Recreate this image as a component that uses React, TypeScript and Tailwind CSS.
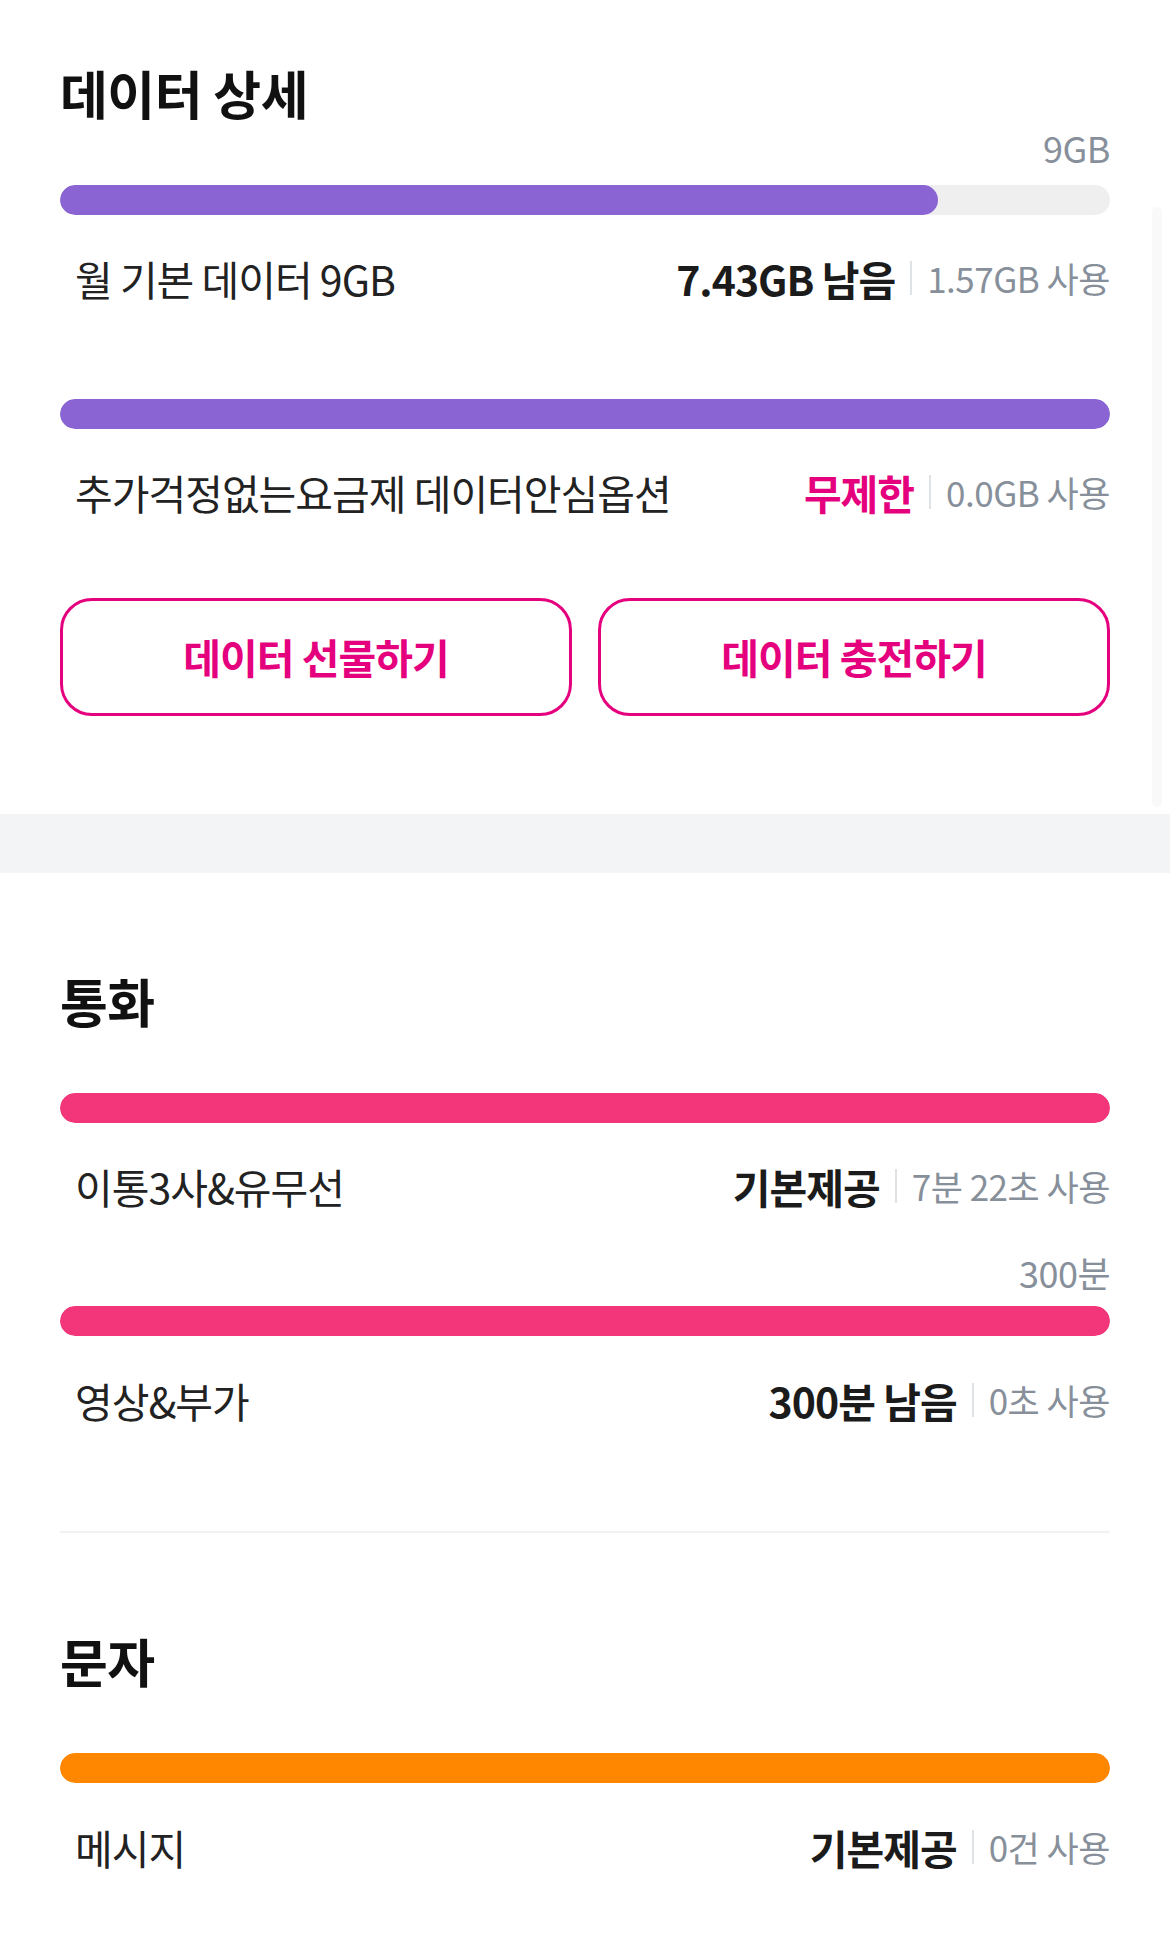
import React from "react";

type UsageRow = {
  label: string;
  value: string;
  valueClass?: string;
  used: string;
};

function Bar({ color, fill }: { color: string; fill: number }) {
  return (
    <div className="h-[30px] w-full rounded-full bg-[#efefef] overflow-hidden">
      <div className={`h-full rounded-full ${color}`} style={{ width: `${fill}%` }} />
    </div>
  );
}

function Row({ row }: { row: UsageRow }) {
  return (
    <div className="flex items-center justify-between pl-[15px] h-[48px]">
      <span className="text-[41px] tracking-[-1px] text-[#222222] leading-[48px]">{row.label}</span>
      <div className="flex items-center">
        <span className={`text-[41px] font-bold tracking-[-1px] leading-[48px] ${row.valueClass ?? "text-[#1b1b1b]"}`}>
          {row.value}
        </span>
        <span className="mx-[15px] h-[34px] w-[2px] bg-[#dfe2e5]" />
        <span className="text-[35px] tracking-[-0.5px] text-[#87909a] leading-[48px]">{row.used}</span>
      </div>
    </div>
  );
}

function Title({ children }: { children: React.ReactNode }) {
  return (
    <h2 className="text-[52px] font-bold tracking-[-0.5px] leading-[60px] text-[#111111]">{children}</h2>
  );
}

function Total({ children }: { children: React.ReactNode }) {
  return (
    <div className="text-right text-[36px] tracking-[-0.5px] leading-[40px] text-[#87909a]">{children}</div>
  );
}

export default function App() {
  return (
    <div className="relative w-[1170px] min-h-[1954px] bg-white font-['Noto_Sans_CJK_KR',sans-serif]">
      <div className="absolute right-[8px] top-[207px] h-[600px] w-[10px] rounded-full bg-[#f9f9f9]" />

      {/* 데이터 */}
      <section className="px-[60px] pt-[63px] pb-[98px]">
        <Title>데이터 상세</Title>
        <div className="mt-[4px]">
          <Total>9GB</Total>
        </div>
        <div className="mt-[18px]">
          <Bar color="bg-[#8b64d3]" fill={83.6} />
        </div>
        <div className="mt-[39px]">
          <Row row={{ label: "월 기본 데이터 9GB", value: "7.43GB 남음", used: "1.57GB 사용" }} />
        </div>
        <div className="mt-[97px]">
          <Bar color="bg-[#8b64d3]" fill={100} />
        </div>
        <div className="mt-[39px]">
          <Row
            row={{
              label: "추가걱정없는요금제 데이터안심옵션",
              value: "무제한",
              valueClass: "text-[#e5007e]",
              used: "0.0GB 사용",
            }}
          />
        </div>
        <div className="mt-[82px] grid grid-cols-2 gap-[26px]">
          <button className="h-[118px] rounded-[32px] border-[3px] border-[#e5007e] text-[41px] font-bold tracking-[-1px] text-[#e5007e]">
            데이터 선물하기
          </button>
          <button className="h-[118px] rounded-[32px] border-[3px] border-[#e5007e] text-[41px] font-bold tracking-[-1px] text-[#e5007e]">
            데이터 충전하기
          </button>
        </div>
      </section>

      <div className="h-[59px] bg-[#f3f4f6]" />

      {/* 통화 */}
      <section className="px-[60px] pt-[98px]">
        <Title>통화</Title>
        <div className="mt-[62px]">
          <Bar color="bg-[#f3357a]" fill={100} />
        </div>
        <div className="mt-[39px]">
          <Row row={{ label: "이통3사&유무선", value: "기본제공", used: "7분 22초 사용" }} />
        </div>
        <div className="mt-[42px]">
          <Total>300분</Total>
        </div>
        <div className="mt-[14px]">
          <Bar color="bg-[#f3357a]" fill={100} />
        </div>
        <div className="mt-[40px]">
          <Row row={{ label: "영상&부가", value: "300분 남음", used: "0초 사용" }} />
        </div>
        <div className="mt-[107px] h-[2px] bg-[#f2f2f2]" />
      </section>

      {/* 문자 */}
      <section className="px-[60px] pt-[98px] pb-[80px]">
        <Title>문자</Title>
        <div className="mt-[62px]">
          <Bar color="bg-[#ff8700]" fill={100} />
        </div>
        <div className="mt-[40px]">
          <Row row={{ label: "메시지", value: "기본제공", used: "0건 사용" }} />
        </div>
      </section>
    </div>
  );
}
